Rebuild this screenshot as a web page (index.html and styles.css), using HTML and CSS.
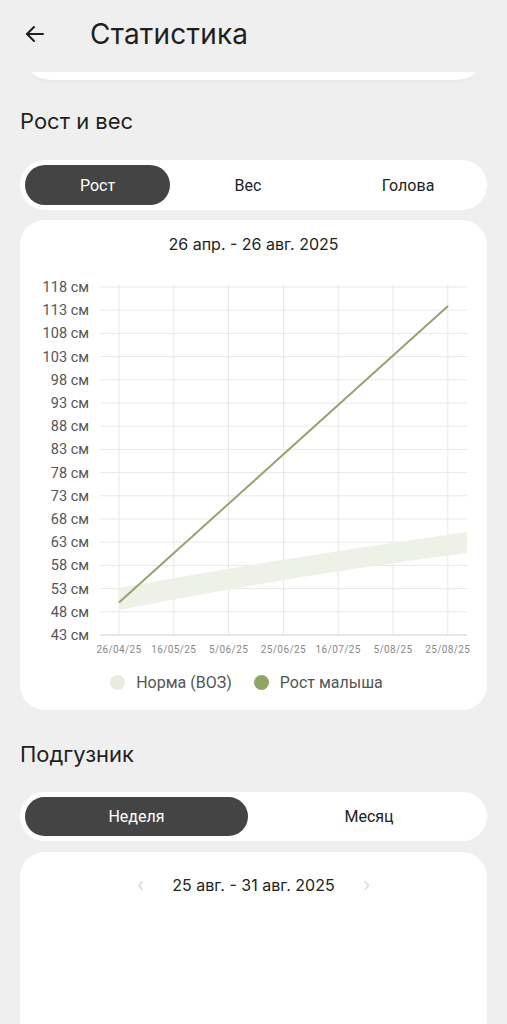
FILE: index.html
```html
<!DOCTYPE html>
<html lang="ru">
<head>
<meta charset="UTF-8" />
<meta name="viewport" content="width=device-width, initial-scale=1" />
<title>Статистика</title>
<link rel="stylesheet" href="styles.css">
</head>
<body>
  <header class="top-bar">
    <button class="back-btn" aria-label="Назад">
      <svg width="24" height="24" viewBox="0 0 24 24" fill="none" stroke="#1f1f1f" stroke-width="2" stroke-linecap="round" stroke-linejoin="round">
        <path d="M20 12H4"/>
        <path d="M11 5l-7 7 7 7"/>
      </svg>
    </button>
    <h1>Статистика</h1>
  </header>

  <div class="card-stub"></div>

  <h2 class="section-title">Рост и вес</h2>

  <div class="segmented three">
    <button class="seg active">Рост</button>
    <button class="seg">Вес</button>
    <button class="seg">Голова</button>
  </div>

  <section class="card chart-card">
    <div class="period">26 апр. - 26 авг. 2025</div>

    <svg class="chart" width="467" height="390" viewBox="0 0 467 390">
      <g id="grid" stroke="#e8e8e8" stroke-width="1"></g>
      <path class="norm-band" d="M99 318 Q 270 287 447 262 L 447 283 Q 270 306 99 340 Z" fill="#edf1e6"/>
      <line x1="80" y1="365" x2="447" y2="365" stroke="#cfcfcf" stroke-width="1.2"/>
      <line x1="99" y1="332.5" x2="428" y2="36" stroke="#94a470" stroke-width="2"/>
      <g id="y-labels" class="y-label"></g>
      <g id="x-labels" class="x-label"></g>
    </svg>

    <div class="legend">
      <span class="dot dot-norm"></span><span>Норма (ВОЗ)</span>
      <span class="dot dot-baby"></span><span>Рост малыша</span>
    </div>
  </section>

  <h2 class="section-title diaper-title">Подгузник</h2>

  <div class="segmented two">
    <button class="seg active">Неделя</button>
    <button class="seg">Месяц</button>
  </div>

  <section class="card week-card">
    <div class="period nav">
      <span class="chev">&#8249;</span>
      <span>25 авг. - 31 авг. 2025</span>
      <span class="chev">&#8250;</span>
    </div>
  </section>

<script>
  // Grid lines and axis labels for the growth chart
  const ns = "http://www.w3.org/2000/svg";
  const grid = document.getElementById("grid");
  const yLabels = document.getElementById("y-labels");
  const xLabels = document.getElementById("x-labels");

  const rowTop = 17;
  const rowStep = 23.2;
  const colLeft = 99;
  const colStep = 54.8;
  const dates = ["26/04/25", "16/05/25", "5/06/25", "25/06/25", "16/07/25", "5/08/25", "25/08/25"];

  for (let i = 0; i < 15; i++) {
    const y = rowTop + i * rowStep;
    const line = document.createElementNS(ns, "line");
    line.setAttribute("x1", 80);
    line.setAttribute("x2", 447);
    line.setAttribute("y1", y);
    line.setAttribute("y2", y);
    grid.appendChild(line);
  }

  for (let i = 0; i < 16; i++) {
    const y = rowTop + i * rowStep;
    const t = document.createElementNS(ns, "text");
    t.setAttribute("x", 69);
    t.setAttribute("y", y + 5);
    t.setAttribute("text-anchor", "end");
    t.textContent = (118 - i * 5) + " см";
    yLabels.appendChild(t);
  }

  dates.forEach(function(d, j) {
    const x = colLeft + j * colStep;
    const line = document.createElementNS(ns, "line");
    line.setAttribute("x1", x);
    line.setAttribute("x2", x);
    line.setAttribute("y1", 14);
    line.setAttribute("y2", 365);
    grid.appendChild(line);

    const t = document.createElementNS(ns, "text");
    t.setAttribute("x", x);
    t.setAttribute("y", 383);
    t.setAttribute("text-anchor", "middle");
    t.textContent = d;
    xLabels.appendChild(t);
  });
</script>
</body>
</html>
```

FILE: styles.css
```css
* {
  box-sizing: border-box;
}

body {
  margin: 0;
  background: #efefef;
  font-family: Inter, "Noto Sans", sans-serif;
  color: #222;
  width: 507px;
  height: 1024px;
  overflow: hidden;
}

/* Header */
.top-bar {
  height: 72px;
  display: flex;
  align-items: center;
  padding-left: 23px;
}

.back-btn {
  background: none;
  border: none;
  padding: 0;
  width: 24px;
  height: 24px;
  display: flex;
  margin-top: -4px;
}

.top-bar h1 {
  margin: -4px 0 0 43px;
  font-size: 28px;
  font-weight: 400;
  letter-spacing: 0.2px;
  color: #1f1f1f;
}

.card-stub {
  height: 8px;
  margin: 0 32px;
  background: #fff;
  border-radius: 0 0 24px 24px / 0 0 8px 8px;
  box-shadow: 0 2px 3px rgba(0, 0, 0, 0.03);
}

.section-title {
  margin: 27px 0 0 20px;
  font-size: 22px;
  line-height: 28px;
  font-weight: 400;
  color: #1f1f1f;
}

.diaper-title {
  margin-top: 30px;
}

/* Segmented tabs */
.segmented {
  margin: 25px 20px 0;
  height: 50px;
  padding: 5px;
  background: #fff;
  border-radius: 25px;
  display: grid;
}

.segmented.three {
  grid-template-columns: 145px 1fr 1fr;
}

.segmented.two {
  margin-top: 24px;
  height: 49px;
  grid-template-columns: 223px 1fr;
}

.seg {
  border: none;
  background: none;
  font-family: Roboto, sans-serif;
  font-size: 16px;
  color: #222;
  border-radius: 20px;
  padding: 0;
}

.seg.active {
  background: #444;
  color: #fff;
}

.segmented.three .seg:nth-child(3) {
  padding-left: 8px;
}

.segmented.two .seg:nth-child(2) {
  padding-left: 8px;
}

/* Cards */
.card {
  margin: 10px 20px 0;
  background: #fff;
  border-radius: 25px;
}

.chart-card {
  height: 490px;
  padding-top: 14px;
}

.period {
  text-align: center;
  font-size: 16px;
  line-height: 20px;
  color: #222;
}

.chart {
  display: block;
  margin-top: 16px;
}

.y-label {
  font-family: Roboto, sans-serif;
  font-size: 14.5px;
  fill: #555;
}

.x-label {
  font-family: Roboto, sans-serif;
  font-size: 10px;
  letter-spacing: 0.4px;
  fill: #888;
}

.legend {
  margin-top: 13px;
  display: flex;
  align-items: center;
  justify-content: center;
  gap: 6px;
  font-family: Roboto, sans-serif;
  font-size: 16px;
  color: #555;
  padding-right: 14px;
}

.dot {
  width: 15px;
  height: 15px;
  border-radius: 50%;
  display: inline-block;
  margin-right: 5px;
}

.dot-norm {
  background: #e7ecdf;
}

.dot-baby {
  background: #8fa566;
  margin-left: 16px;
}

.week-card {
  margin-top: 11px;
  height: 200px;
  padding-top: 23px;
}

.period.nav {
  display: flex;
  justify-content: center;
  gap: 28px;
  font-size: 16px;
}

.chev {
  color: #ddd;
  font-size: 20px;
  line-height: 20px;
}
```
